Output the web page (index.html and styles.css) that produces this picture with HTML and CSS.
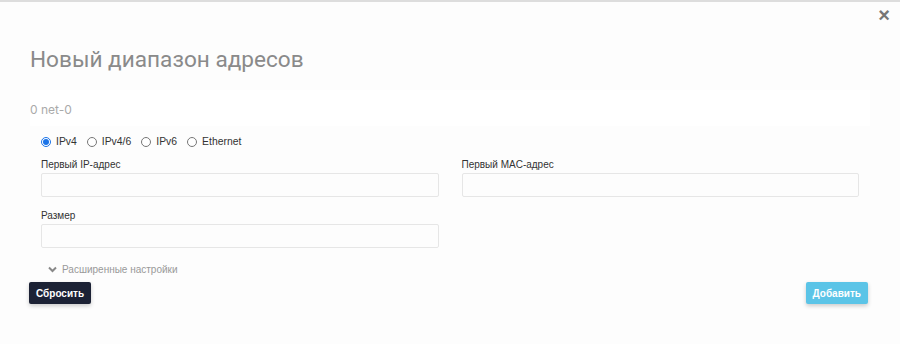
FILE: index.html
```html
<!DOCTYPE html>
<html lang="ru">
<head>
    <meta charset="UTF-8">
    <meta name="viewport" content="width=device-width, initial-scale=1.0">
    <title>Новый диапазон адресов</title>
    <link rel="stylesheet" href="styles.css">
</head>
<body>

    <div class="modal">
        <button class="close" title="Закрыть">&times;</button>

        <h1 class="modal-title">Новый диапазон адресов</h1>
        <div class="subtitle">0 net-0</div>

        <div class="form">
            <div class="radios">
                <label><input type="radio" name="type" checked> IPv4</label>
                <label><input type="radio" name="type"> IPv4/6</label>
                <label><input type="radio" name="type"> IPv6</label>
                <label><input type="radio" name="type"> Ethernet</label>
            </div>

            <div class="fields">
                <div class="field">
                    <label>Первый IP-адрес</label>
                    <input type="text">
                </div>
                <div class="field">
                    <label>Первый MAC-адрес</label>
                    <input type="text">
                </div>
                <div class="field">
                    <label>Размер</label>
                    <input type="text">
                </div>
            </div>

            <div class="advanced">
                <svg width="9" height="7" viewBox="0 0 9 7"><path d="M1 1.5 L4.5 5 L8 1.5" fill="none" stroke="#888" stroke-width="2"/></svg>
                Расширенные настройки
            </div>
        </div>

        <div class="actions">
            <button class="btn btn-dark">Сбросить</button>
            <button class="btn btn-info">Добавить</button>
        </div>
    </div>

</body>
</html>
```

FILE: styles.css
```css
body {
    margin: 0;
    background-color: #fdfdfd;
    font-family: "Liberation Sans", Arial, sans-serif;
}

.modal {
    position: relative;
    border-top: 2px solid #ddd;
    padding: 40px 32px 20px 30px;
    height: 342px;
    box-sizing: border-box;
}

.close {
    position: absolute;
    top: 2px;
    right: 10px;
    background: none;
    border: none;
    font-size: 20px;
    font-weight: bold;
    color: #777;
    cursor: pointer;
    padding: 0;
}

.modal-title {
    font-family: Roboto, "Noto Sans", sans-serif;
    font-size: 22.6px;
    font-weight: 400;
    color: #8a8a8a;
    margin: 0;
    line-height: 36px;
}

.subtitle {
    font-family: Inter, "Noto Sans", sans-serif;
    font-size: 12px;
    color: #aaa;
    margin-top: 12px;
    padding: 12px 0 8px;
    line-height: 16px;
    background-color: #fff;
    margin-right: -2px;
}

.form {
    padding: 0 9px 0 11px;
}

.radios {
    display: flex;
    gap: 10px;
    margin-top: 10px;
    font-size: 10.4px;
    color: #333;
}

.radios label {
    display: flex;
    align-items: center;
    gap: 5px;
}

.radios input {
    margin: 0;
    width: 10px;
    height: 10px;
    accent-color: #1a73e8;
}

.fields {
    display: grid;
    grid-template-columns: 1fr 1fr;
    column-gap: 23px;
    row-gap: 11px;
    margin-top: 10px;
}

.field label {
    display: block;
    font-size: 10px;
    color: #333;
    line-height: 16px;
    margin-bottom: 0;
}

.field input {
    display: block;
    width: 100%;
    box-sizing: border-box;
    height: 24px;
    border: 1px solid #e6e6e6;
    border-radius: 2px;
    background-color: #fdfdfd;
}

.advanced {
    display: flex;
    align-items: center;
    gap: 5px;
    margin: 16px 0 0 7px;
    font-size: 10px;
    color: #999;
}

.actions {
    display: flex;
    justify-content: space-between;
    margin-top: 7px;
    margin-left: -1px;
}

.btn {
    border: none;
    border-radius: 2px;
    color: #fff;
    font-family: "Liberation Sans", Arial, sans-serif;
    font-weight: bold;
    font-size: 10px;
    height: 22px;
    padding: 0 7px;
    cursor: pointer;
    box-shadow: 0 2px 4px rgba(0, 0, 0, 0.2);
}

.btn-dark {
    background-color: #1c2235;
}

.btn-info {
    background-color: #5bc4e7;
}
```
